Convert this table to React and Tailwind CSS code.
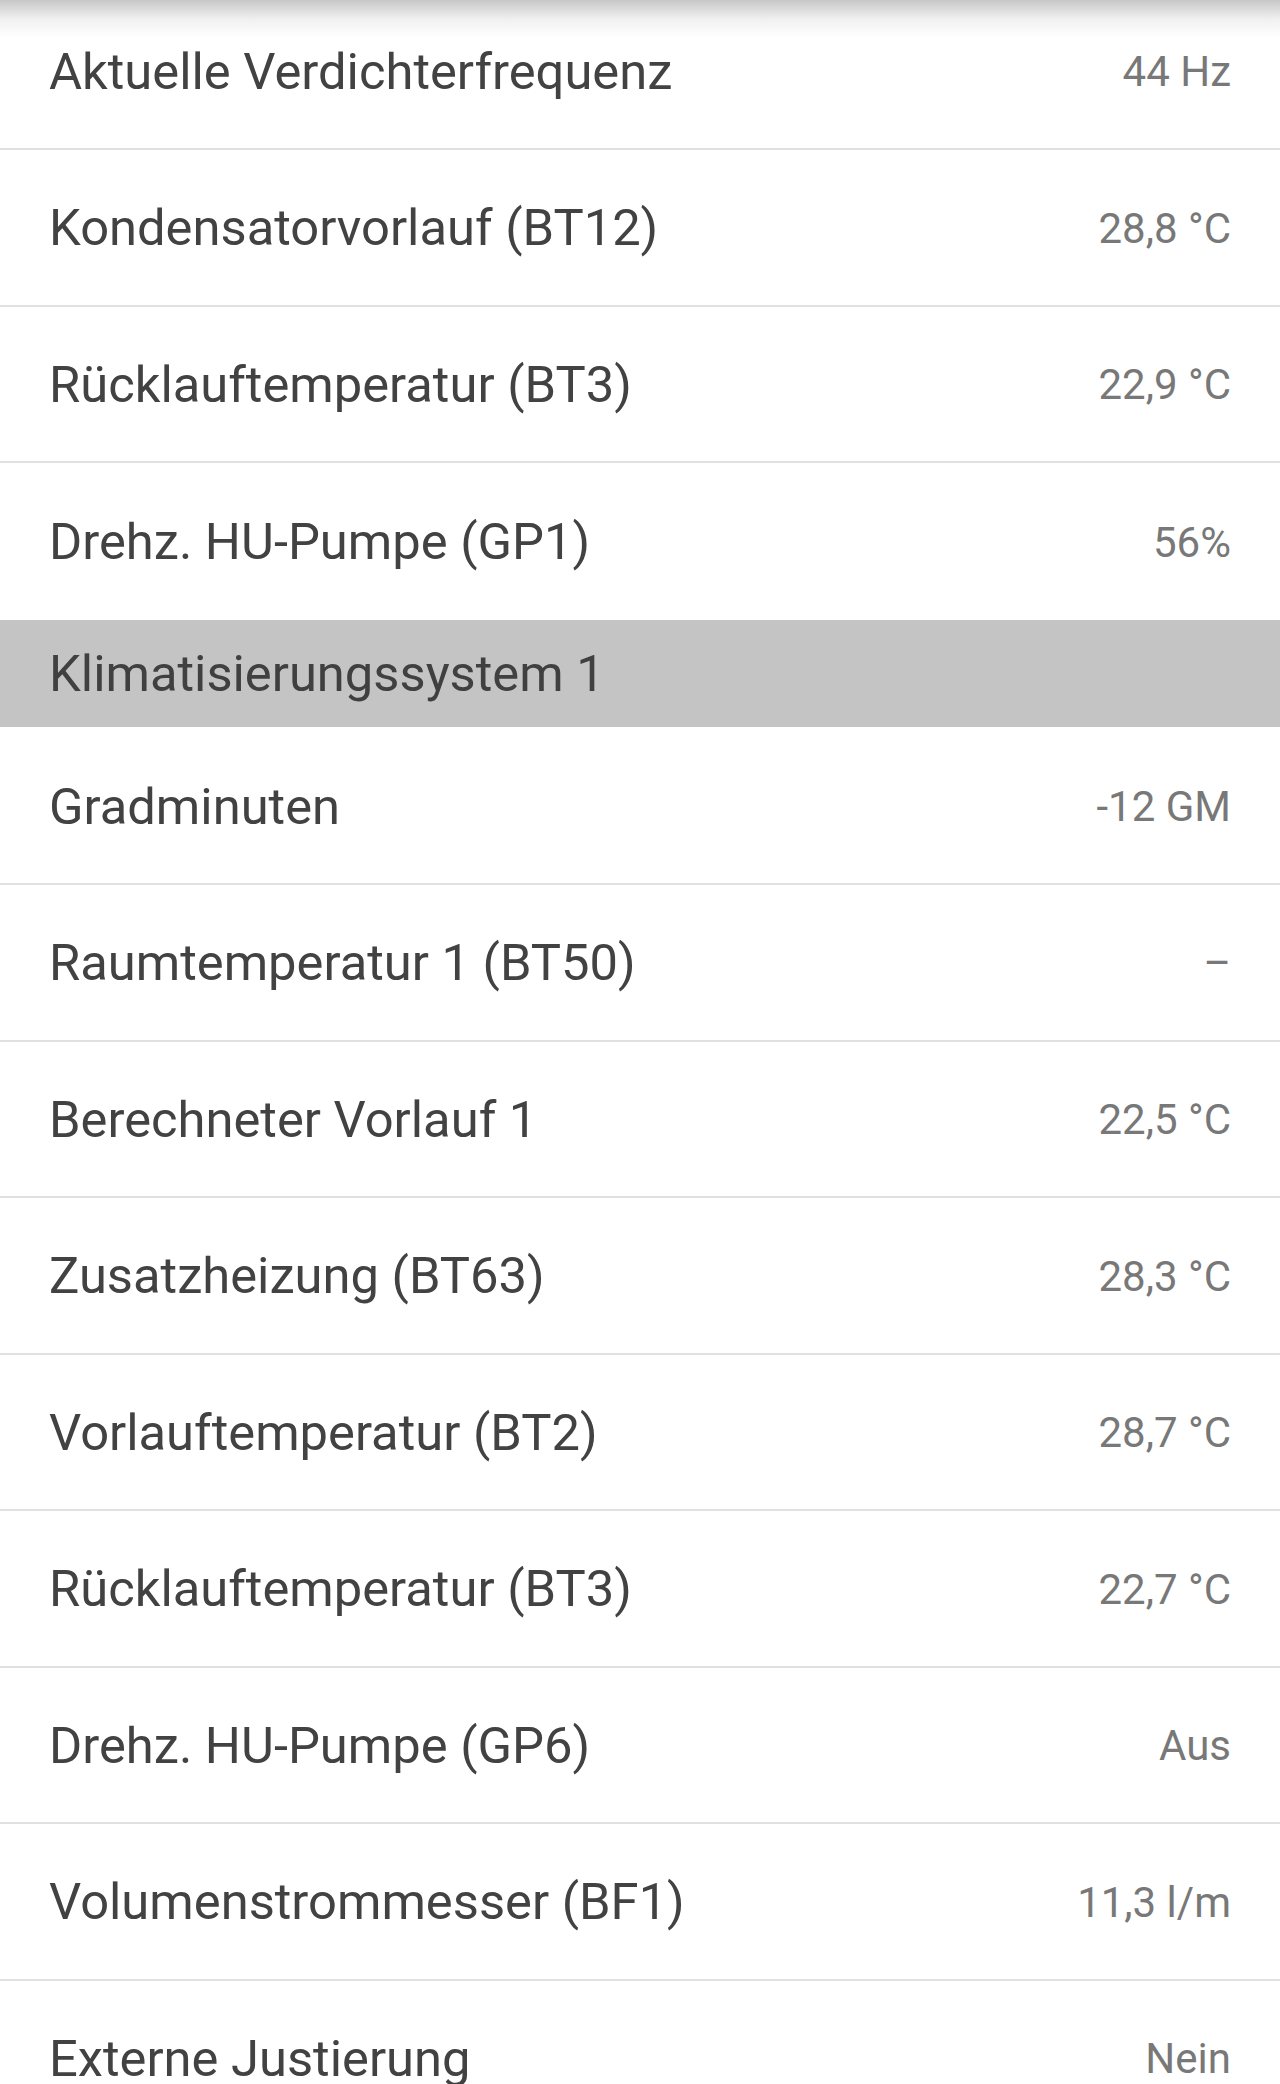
import React from "react";

const top = [
  ["Aktuelle Verdichterfrequenz", "44 Hz"],
  ["Kondensatorvorlauf (BT12)", "28,8 °C"],
  ["Rücklauftemperatur (BT3)", "22,9 °C"],
  ["Drehz. HU-Pumpe (GP1)", "56%"],
];

const bottom = [
  ["Gradminuten", "-12 GM"],
  ["Raumtemperatur 1 (BT50)", "–"],
  ["Berechneter Vorlauf 1", "22,5 °C"],
  ["Zusatzheizung (BT63)", "28,3 °C"],
  ["Vorlauftemperatur (BT2)", "28,7 °C"],
  ["Rücklauftemperatur (BT3)", "22,7 °C"],
  ["Drehz. HU-Pumpe (GP6)", "Aus"],
  ["Volumenstrommesser (BF1)", "11,3 l/m"],
  ["Externe Justierung", "Nein"],
];

function Row({ label, value, border = true }) {
  return (
    <div
      className={
        "flex h-[156.5px] items-center justify-between pl-[49px] pr-[49px] pt-[3px] " +
        (border ? "border-b-2 border-[#e0e0e0]" : "")
      }
    >
      <span className="text-[50.7px] leading-none text-[#424242]">{label}</span>
      <span className="text-[42px] leading-none text-[#787878]">{value}</span>
    </div>
  );
}

export default function App() {
  return (
    <div
      className="relative h-[2084px] w-[1280px] overflow-hidden bg-white"
      style={{ fontFamily: "Roboto, 'Noto Sans', sans-serif" }}
    >
      <div className="-mt-[6.5px]">
        {top.map(([l, v], i) => (
          <Row key={i} label={l} value={v} border={i < top.length - 1} />
        ))}
        <div className="flex h-[109px] items-center border-b-2 border-white bg-[#c4c4c4] pl-[49px] pt-[3px]">
          <span className="text-[50.7px] leading-none text-[#404040]">Klimatisierungssystem 1</span>
        </div>
        {bottom.map(([l, v], i) => (
          <Row key={i} label={l} value={v} />
        ))}
      </div>
      <div className="pointer-events-none absolute left-0 top-0 h-[38px] w-full bg-gradient-to-b from-[rgba(0,0,0,0.22)] via-[rgba(0,0,0,0.06)] to-transparent" />
    </div>
  );
}
